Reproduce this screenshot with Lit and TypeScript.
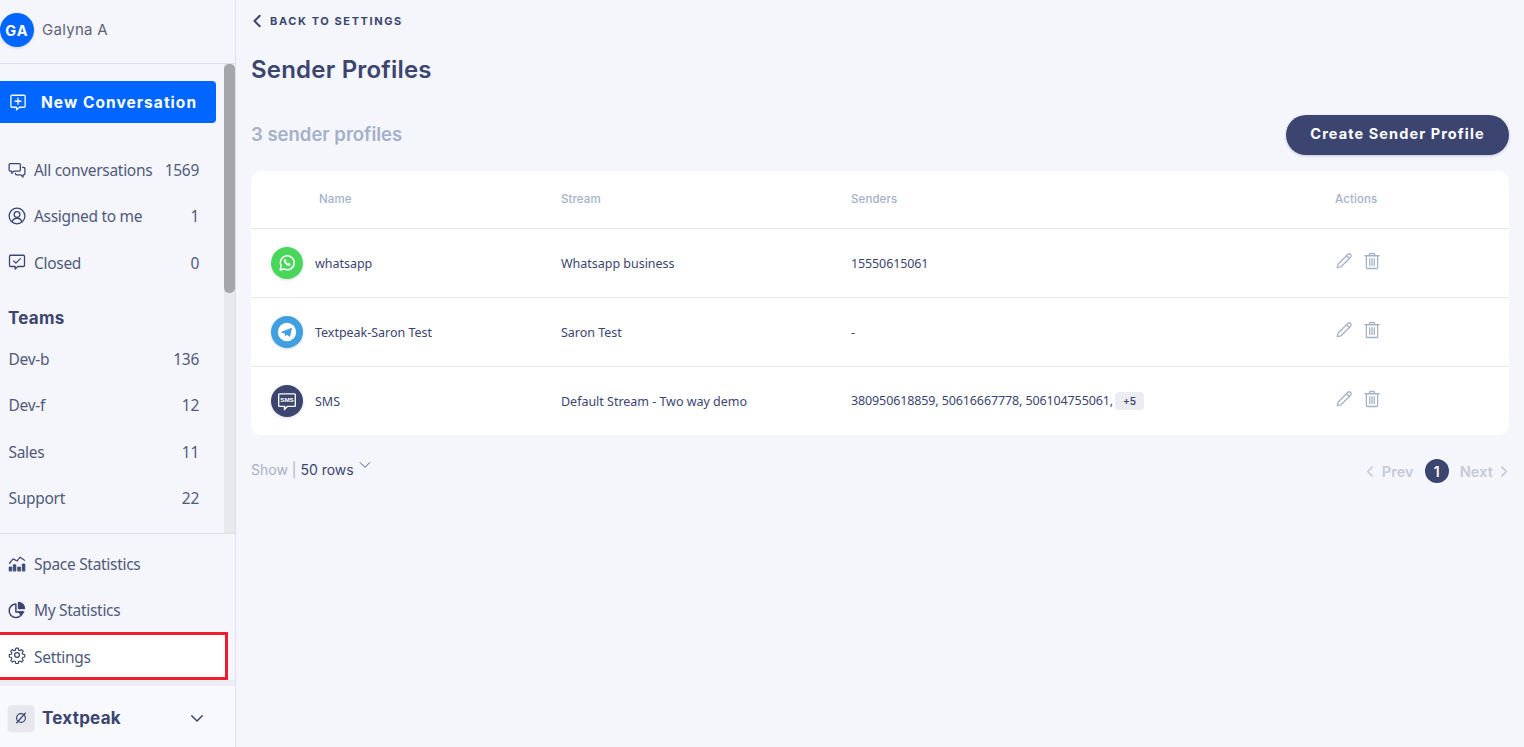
import { LitElement, html, css, svg } from "lit";
import { customElement } from "lit/decorators.js";

const ic = (body: unknown, size = 18, stroke = "#3c4570", sw = 1.5) => html`<svg width=${size} height=${size} viewBox="0 0 24 24" fill="none" stroke=${stroke} stroke-width=${sw} stroke-linecap="round" stroke-linejoin="round">${body}</svg>`;

const icons = {
  newConv: svg`<path d="M4 3h16a1.5 1.5 0 0 1 1.5 1.5v13a1.5 1.5 0 0 1-1.5 1.5h-6l-4 3.5V19H4a1.5 1.5 0 0 1-1.5-1.5v-13A1.5 1.5 0 0 1 4 3z"/><path d="M12 7v8M8 11h8"/>`,
  all: svg`<path d="M3 3.5h12a1.5 1.5 0 0 1 1.5 1.5v7a1.5 1.5 0 0 1-1.5 1.5H8l-3 3v-3H3A1.5 1.5 0 0 1 1.5 12V5A1.5 1.5 0 0 1 3 3.5z"/><path d="M19.5 8.5H21A1.5 1.5 0 0 1 22.5 10v7a1.5 1.5 0 0 1-1.5 1.5h-1v3l-3-3h-6A1.5 1.5 0 0 1 10 17v-.5"/>`,
  user: svg`<circle cx="12" cy="12" r="10.5"/><circle cx="12" cy="10" r="3.8"/><path d="M5.5 19.500c1-3 3.500-4.500 6.500-4.500s5.500 1.500 6.500 4.500"/>`,
  closed: svg`<path d="M3.500 3h17A1.500 1.500 0 0 1 22 4.500v12a1.500 1.500 0 0 1-1.500 1.500H13l-3.500 3.500V18h-6A1.500 1.500 0 0 1 2 16.500v-12A1.500 1.500 0 0 1 3.500 3z"/><path d="M7.500 10.500l3 3 6-6"/>`,
  stats: svg`<path d="M1.500 21v-5h3.500v5zM7 21v-8h3.500v8zM13 21v-5h3.500v5zM19 21v-9h3.500v9z" fill="#3c4570" stroke-width="1"/><path d="M2 11l5-6 5 3 4-5 6 4" stroke-dasharray="3 1.500"/>`,
  pie: svg`<path d="M10.500 4a9 9 0 1 0 9 10.500h-9z" stroke-width="2"/><path d="M14 2a8 8 0 0 1 8 8h-8z" fill="#3c4570"/><path d="M14 14.500h7l-3.500 4z" fill="#3c4570"/>`,
  gear: svg`<circle cx="12" cy="12" r="3.200"/><path d="M10.300 2h3.400l.6 2.900 1.900.8 2.500-1.600 2.400 2.400-1.600 2.500.8 1.900 2.900.6v3.400l-2.900.6-.8 1.900 1.600 2.500-2.400 2.400-2.500-1.600-1.900.8-.6 2.900h-3.400l-.6-2.900-1.900-.8-2.500 1.600-2.400-2.400 1.600-2.500-.8-1.900-2.900-.6v-3.400l2.900-.6.8-1.900-1.600-2.500 2.400-2.400 2.500 1.600 1.900-.8z" transform="translate(12 12) scale(.92) translate(-12 -12)"/>`,
  pencil: svg`<path d="M3 21l1.300-5L17 3.300a2.300 2.300 0 0 1 3.700 3.700L8 19.700z"/><path d="M15.300 5l3.700 3.700"/>`,
  trash: svg`<path d="M2.500 5h19M8.500 5V3.500A1.500 1.500 0 0 1 10 2h4a1.500 1.500 0 0 1 1.500 1.500V5"/><path d="M4.500 5v15.500A1.500 1.500 0 0 0 6 22h12a1.500 1.500 0 0 0 1.500-1.500V5"/><path d="M9 9v9M12 9v9M15 9v9"/>`,
};

const rows = [
  { name: "whatsapp", stream: "Whatsapp business", senders: "15550615061", more: "", kind: "wa" },
  { name: "Textpeak-Saron Test", stream: "Saron Test", senders: "-", more: "", kind: "tg" },
  { name: "SMS", stream: "Default Stream - Two way demo", senders: "380950618859, 50616667778, 506104755061,", more: "+5", kind: "sms" },
];

const avatar = (k: string) => {
  if (k === "wa")
    return html`<span class="ch wa"><svg width="18" height="18" viewBox="0 0 24 24" fill="none" stroke="#fff" stroke-width="2" stroke-linecap="round" stroke-linejoin="round"><path d="M2.800 21.200l1.400-5A9.300 9.300 0 1 1 8 19.900z"/><path d="M8.500 8c.5-1 1.500-1 1.800-.3l.6 1.500-.8 1.100c.7 1.300 1.800 2.300 3 2.900l1.100-.9 1.700.8c.5.400.2 1.600-.7 2.100-3 .9-7.700-3.500-6.700-7.200z" fill="#fff" stroke-width="1"/></svg></span>`;
  if (k === "tg")
    return html`<span class="ch tg"><svg width="20" height="20" viewBox="0 0 24 24"><circle cx="12" cy="12" r="11" fill="#fff"/><path d="M5.500 11.800l11.500-4.600c.6-.2 1 .1.800.9l-2 9c-.1.600-.6.800-1.100.4l-3-2.200-1.500 1.400c-.3.300-.7.200-.7-.2l-.2-2.600-3.600-1.100c-.6-.2-.6-.6-.200-.8z" fill="#3f9fe0"/></svg></span>`;
  return html`<span class="ch sms"><svg width="20" height="20" viewBox="0 0 24 24"><path d="M3 3.500h18a1 1 0 0 1 1 1v13a1 1 0 0 1-1 1h-8.500l-3.500 3.500v-3.500H3a1 1 0 0 1-1-1v-13a1 1 0 0 1 1-1z" fill="none" stroke="#fff" stroke-width="1.600"/><text x="12" y="13.500" text-anchor="middle" font-size="7.500" font-weight="700" font-family="Liberation Sans" fill="#fff">SMS</text></svg></span>`;
};

@customElement("app-root")
export class AppRoot extends LitElement {
  static styles = css`
    :host { display: flex; height: 747px; width: 1524px; overflow: hidden; background: #f4f6fb; color: #3c4570; font-family: "Noto Sans", sans-serif; }
    * { box-sizing: border-box; }
    .side { width: 236px; height: 747px; flex: none; border-right: 1px solid #dde0ea; display: flex; flex-direction: column; }
    .me { height: 64px; flex: none; display: flex; align-items: center; gap: 8px; border-bottom: 1px solid #dcdfe9; padding-bottom: 3px; }
    .av { width: 34px; height: 34px; border-radius: 50%; background: #0066ff; color: #fff; font: 700 14.500px Inter, sans-serif; letter-spacing: 1px; display: flex; align-items: center; justify-content: center; box-shadow: 0 1px 3px rgba(60,69,112,.2); }
    .me-name { font: 400 15px Inter, sans-serif; color: #5f6478; letter-spacing: .3px; padding-bottom: 1px; }
    .scroll { height: 470px; flex: none; display: flex; overflow: hidden; border-bottom: 1px solid #dcdfe9; }
    .nav { width: 224px; flex: none; padding-top: 17px; }
    .track { width: 11px; background: #e8e9ec; flex: none; }
    .thumb { height: 229px; background: #a5a6aa; border-radius: 5px; }
    .new { width: 216px; height: 42px; background: #0066ff; color: #fff; border-radius: 0 4px 4px 0; display: flex; align-items: center; padding-left: 9px; gap: 14px; font: 700 15.500px Inter, sans-serif; letter-spacing: 1.050px; margin-bottom: 23px; }
    .item { width: 224px; height: 46.300px; display: flex; align-items: center; gap: 8px; padding: 2px 25px 0 8px; font-size: 15.500px; letter-spacing: -.3px; color: #515a7c; white-space: nowrap; }
    .item span.label { flex: 1; }
    .item svg { flex: none; margin-top: -1px; }
    .item.plain { padding-left: 8.500px; }
    .teams { font: 700 17px Inter, sans-serif; color: #3c4570; padding: 23px 0 0 8px; height: 50px; letter-spacing: .25px; }
    .bottom { padding-top: 6px; flex: none; }
    .settings { width: 228px; height: 48px; margin-top: -1px; background: #fff; border: solid #ed1c2e; border-width: 3px 3px 3px 0; padding-top: 0; }
    .settings .label { padding-top: 2px; }
    .shade { height: 6px; background: #eceef3; flex: none; }
    .foot { flex: 1; background: #f8f9fc; display: flex; align-items: center; padding: 4px 29px 0 8px; gap: 8px; }
    .logo { width: 26px; height: 26px; border-radius: 4px; background: #e6e8ee; display: flex; align-items: center; justify-content: center; box-shadow: 0 1px 2px rgba(60,69,112,.12); }
    .foot b { flex: 1; font: 700 17px Inter, sans-serif; color: #3c4570; letter-spacing: .25px; }
    .main { flex: 1; padding: 0 15px 0 15px; min-width: 0; }
    .back { height: 42px; display: flex; align-items: center; gap: 5px; font: 700 11px Inter, sans-serif; letter-spacing: 1.600px; color: #3c4570; }
    h1 { margin: 0; height: 55px; display: flex; align-items: center; font: 600 24px Inter, sans-serif; color: #3c4570; letter-spacing: .2px; }
    .bar { display: flex; align-items: center; justify-content: space-between; height: 40px; margin-top: 18px; margin-bottom: 16px; }
    .count { font: 600 18.500px Inter, sans-serif; color: #a5b0c9; letter-spacing: 0; margin-top: -2px; }
    .create { width: 223px; height: 40px; border-radius: 20px; background: #3c4570; color: #fff; display: flex; align-items: center; justify-content: center; padding-bottom: 3px; font: 700 14.500px Inter, sans-serif; letter-spacing: 1.100px; box-shadow: 0 1px 3px rgba(60,69,112,.25); }
    .card { background: #fff; border-radius: 10px; overflow: hidden; }
    .row { display: grid; grid-template-columns: 310px 290px 484px 1fr; align-items: center; height: 69px; border-top: 1px solid #e7e8ee; font-size: 12.500px; color: #3c4570; letter-spacing: -.02px; }
    .row.head { height: 57px; border: 0; padding-bottom: 2px; font: 500 11.500px Inter, sans-serif; letter-spacing: .1px; color: #a5b0c9; }
    .row.head > :first-child { padding-left: 68px; }
    .nm { display: flex; align-items: center; gap: 12px; padding-left: 20px; }
    .ch { width: 32px; height: 32px; border-radius: 50%; display: flex; align-items: center; justify-content: center; flex: none; box-shadow: 0 1px 3px rgba(60,69,112,.2); }
    .wa { background: #48d75a; } .tg { background: #3f9fe0; } .sms { background: #3c4570; }
    .snd { letter-spacing: -.12px; }
    .more { display: inline-block; font: 600 10px Inter, sans-serif; letter-spacing: 0; background: #ebedf2; color: #3c4570; border-radius: 4px; padding: 3px 8px; margin-left: 2px; }
    .acts { display: flex; gap: 10px; align-items: center; margin-top: -5px; }
    .pager { display: flex; align-items: center; justify-content: space-between; margin-top: 24px; height: 24px; }
    .show { font: 400 14px Inter, sans-serif; color: #a5b0c9; display: flex; align-items: center; gap: 4px; margin-top: -4px; }
    .show b { font-weight: 400; color: #3c4570; }
    .show svg { margin-top: -8px; }
    .pg { display: flex; align-items: center; font: 600 14.500px Inter, sans-serif; color: #c6c9d8; gap: 4px; letter-spacing: .1px; }
    .pg svg:last-child { margin-left: -1px; }
    .one { width: 24px; height: 24px; border-radius: 50%; background: #3c4570; color: #fff; display: flex; align-items: center; justify-content: center; margin: 0 7px; font-size: 14px; }
  `;

  private navItem(icon: unknown, label: string, n?: string) {
    return html`<div class="item">${ic(icon, 18, "#3c4570", 1.7)}<span class="label">${label}</span>${n ? html`<span>${n}</span>` : ""}</div>`;
  }

  render() {
    const chev = (d: string, c: string, s = 12, w = 2.500) => html`<svg width=${s} height=${s} viewBox="0 0 24 24" fill="none" stroke=${c} stroke-width=${w} stroke-linecap="round" stroke-linejoin="round"><path d=${d}/></svg>`;
    return html`
      <aside class="side">
        <div class="me"><div class="av">GA</div><span class="me-name">Galyna A</span></div>
        <div class="scroll">
          <div class="nav">
            <div class="new">${ic(icons.newConv, 18, "#fff", 1.7)}<span>New Conversation</span></div>
            ${this.navItem(icons.all, "All conversations", "1569")}
            ${this.navItem(icons.user, "Assigned to me", "1")}
            ${this.navItem(icons.closed, "Closed", "0")}
            <div class="teams">Teams</div>
            ${[["Dev-b", "136"], ["Dev-f", "12"], ["Sales", "11"], ["Support", "22"]].map(
              ([a, b]) => html`<div class="item plain"><span class="label">${a}</span><span>${b}</span></div>`
            )}
          </div>
          <div class="track"><div class="thumb"></div></div>
        </div>
        <div class="bottom">
          ${this.navItem(icons.stats, "Space Statistics")}
          ${this.navItem(icons.pie, "My Statistics")}
          <div class="item settings">${ic(icons.gear, 18, "#3c4570", 1.7)}<span class="label">Settings</span></div>
        </div>
        <div class="shade"></div>
        <div class="foot">
          <div class="logo"><svg width="14" height="14" viewBox="0 0 24 24" fill="none" stroke="#3c4570" stroke-width="2"><circle cx="12" cy="12" r="7.500"/><path d="M4 21L20 3"/></svg></div>
          <b>Textpeak</b>
          ${chev("M5 9l7 7 7-7", "#3c4570", 18, 2)}
        </div>
      </aside>
      <main class="main">
        <div class="back">${chev("M15 3l-9 9 9 9", "#3c4570", 14, 3.500)}<span>BACK TO SETTINGS</span></div>
        <h1>Sender Profiles</h1>
        <div class="bar"><span class="count">3 sender profiles</span><div class="create">Create Sender Profile</div></div>
        <div class="card">
          <div class="row head"><span>Name</span><span>Stream</span><span>Senders</span><span>Actions</span></div>
          ${rows.map(
            (r) => html`<div class="row">
              <div class="nm">${avatar(r.kind)}<span>${r.name}</span></div>
              <span>${r.stream}</span>
              <span class="snd">${r.senders}${r.more ? html`<span class="more">${r.more}</span>` : ""}</span>
              <div class="acts">${ic(icons.pencil, 18, "#a5b0c9", 1.7)}${ic(icons.trash, 18, "#a5b0c9", 1.7)}</div>
            </div>`
          )}
        </div>
        <div class="pager">
          <div class="show"><span>Show | <b>50 rows</b></span>${chev("M4 8l8 8 8-8", "#3c4570", 14, 1.500)}</div>
          <div class="pg">${chev("M13 4l-8 8 8 8", "#c6c9d8", 13, 3)}<span>Prev</span><span class="one">1</span><span>Next</span>${chev("M11 4l8 8-8 8", "#c6c9d8", 13, 3)}</div>
        </div>
      </main>
    `;
  }
}
